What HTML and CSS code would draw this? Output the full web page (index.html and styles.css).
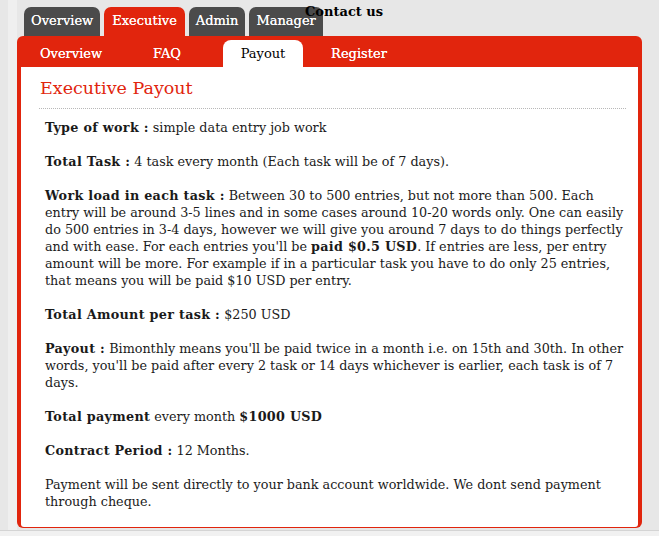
FILE: index.html
```html
<!DOCTYPE html>
<html>
<head>
<meta charset="utf-8">
<link rel="stylesheet" href="styles.css">
</head>
<body>
<div class="page">
  <div class="topbar">
    <ul class="tabs">
      <li class="tab">Overview</li>
      <li class="tab active">Executive</li>
      <li class="tab">Admin</li>
      <li class="tab">Manager</li>
    </ul>
    <span class="contact">Contact us</span>
  </div>
  <div class="box">
    <ul class="subtabs">
      <li class="subtab">Overview</li>
      <li class="subtab">FAQ</li>
      <li class="subtab current">Payout</li>
      <li class="subtab">Register</li>
    </ul>
    <div class="content">
      <h1 class="title">Executive Payout</h1>
      <div class="text">
        <p><b>Type of work :</b> simple data entry job work</p>
        <p><b>Total Task :</b> 4 task every month (Each task will be of 7 days).</p>
        <p><b>Work load in each task :</b> Between 30 to 500 entries, but not more than 500. Each entry will be around 3-5 lines and in some cases around 10-20 words only. One can easily do 500 entries in 3-4 days, however we will give you around 7 days to do things perfectly and with ease. For each entries you'll be <b>paid $0.5 USD</b>. If entries are less, per entry amount will be more. For example if in a particular task you have to do only 25 entries, that means you will be paid $10 USD per entry.</p>
        <p><b>Total Amount per task :</b> $250 USD</p>
        <p><b>Payout :</b> Bimonthly means you'll be paid twice in a month i.e. on 15th and 30th. In other words, you'll be paid after every 2 task or 14 days whichever is earlier, each task is of 7 days.</p>
        <p><b>Total payment</b> every month <b>$1000 USD</b></p>
        <p><b>Contract Period :</b> 12 Months.</p>
        <p>Payment will be sent directly to your bank account worldwide. We dont send payment through cheque.</p>
      </div>
    </div>
  </div>
</div>
<div class="footer"></div>
</body>
</html>
```
FILE: styles.css
```css
html, body {
  margin: 0;
  padding: 0;
}
body {
  background: #e7e7e7;
  font-family: "DejaVu Serif", serif;
  height: 536px;
  overflow: hidden;
}
.page {
  margin-left: 8px;
  border-left: 9px solid #efefef;
  height: 530px;
  width: 625px;
}
.topbar {
  position: relative;
  height: 36px;
}
.tabs {
  list-style: none;
  margin: 0;
  padding: 7px 0 0 7px;
  display: flex;
  gap: 4px;
}
.tab {
  height: 29px;
  line-height: 27px;
  background: #4b4b4b;
  color: #fff;
  font-size: 13px;
  padding: 0 7px;
  border-radius: 7px 7px 0 0;
  text-shadow: 0 0 0.4px #fff;
}
.tab.active {
  background: #e1250d;
  padding: 0 8px;
}
.contact {
  position: absolute;
  left: 288px;
  top: 4px;
  font-size: 13px;
  font-weight: bold;
  color: #000;
}
.box {
  background: #e1250d;
  border-radius: 6px;
  height: 492px;
  display: flex;
  flex-direction: column;
}
.subtabs {
  list-style: none;
  margin: 0;
  padding: 4px 0 0 14px;
  display: flex;
  gap: 16px;
  height: 27px;
}
.subtab {
  width: 80px;
  text-align: center;
  color: #fff;
  font-size: 13px;
  line-height: 27px;
  text-shadow: 0 0 0.4px #fff;
}
.subtab.current {
  background: #fff;
  color: #000;
  text-shadow: none;
  border-radius: 8px 8px 0 0;
}
.content {
  flex: 1;
  background: #fff;
  margin: 0 4px 4px;
  padding: 0 12px 0 18px;
  border-radius: 0 0 3px 3px;
}
.title {
  margin: 0;
  padding: 10px 0 9px 1px;
  font-size: 17.5px;
  font-weight: normal;
  color: #e1250d;
  line-height: 22px;
  border-bottom: 1px dotted #b8b8b8;
}
.text {
  padding: 10px 0 0 6px;
  font-size: 12.75px;
  line-height: 17px;
  color: #1a1a1a;
}
.text b {
  letter-spacing: 0.3px;
}
.text p {
  margin: 0 0 17px;
}
.footer {
  height: 6px;
  background: #f1f1f1;
  border-top: 1px solid #d4d4d4;
}
```
